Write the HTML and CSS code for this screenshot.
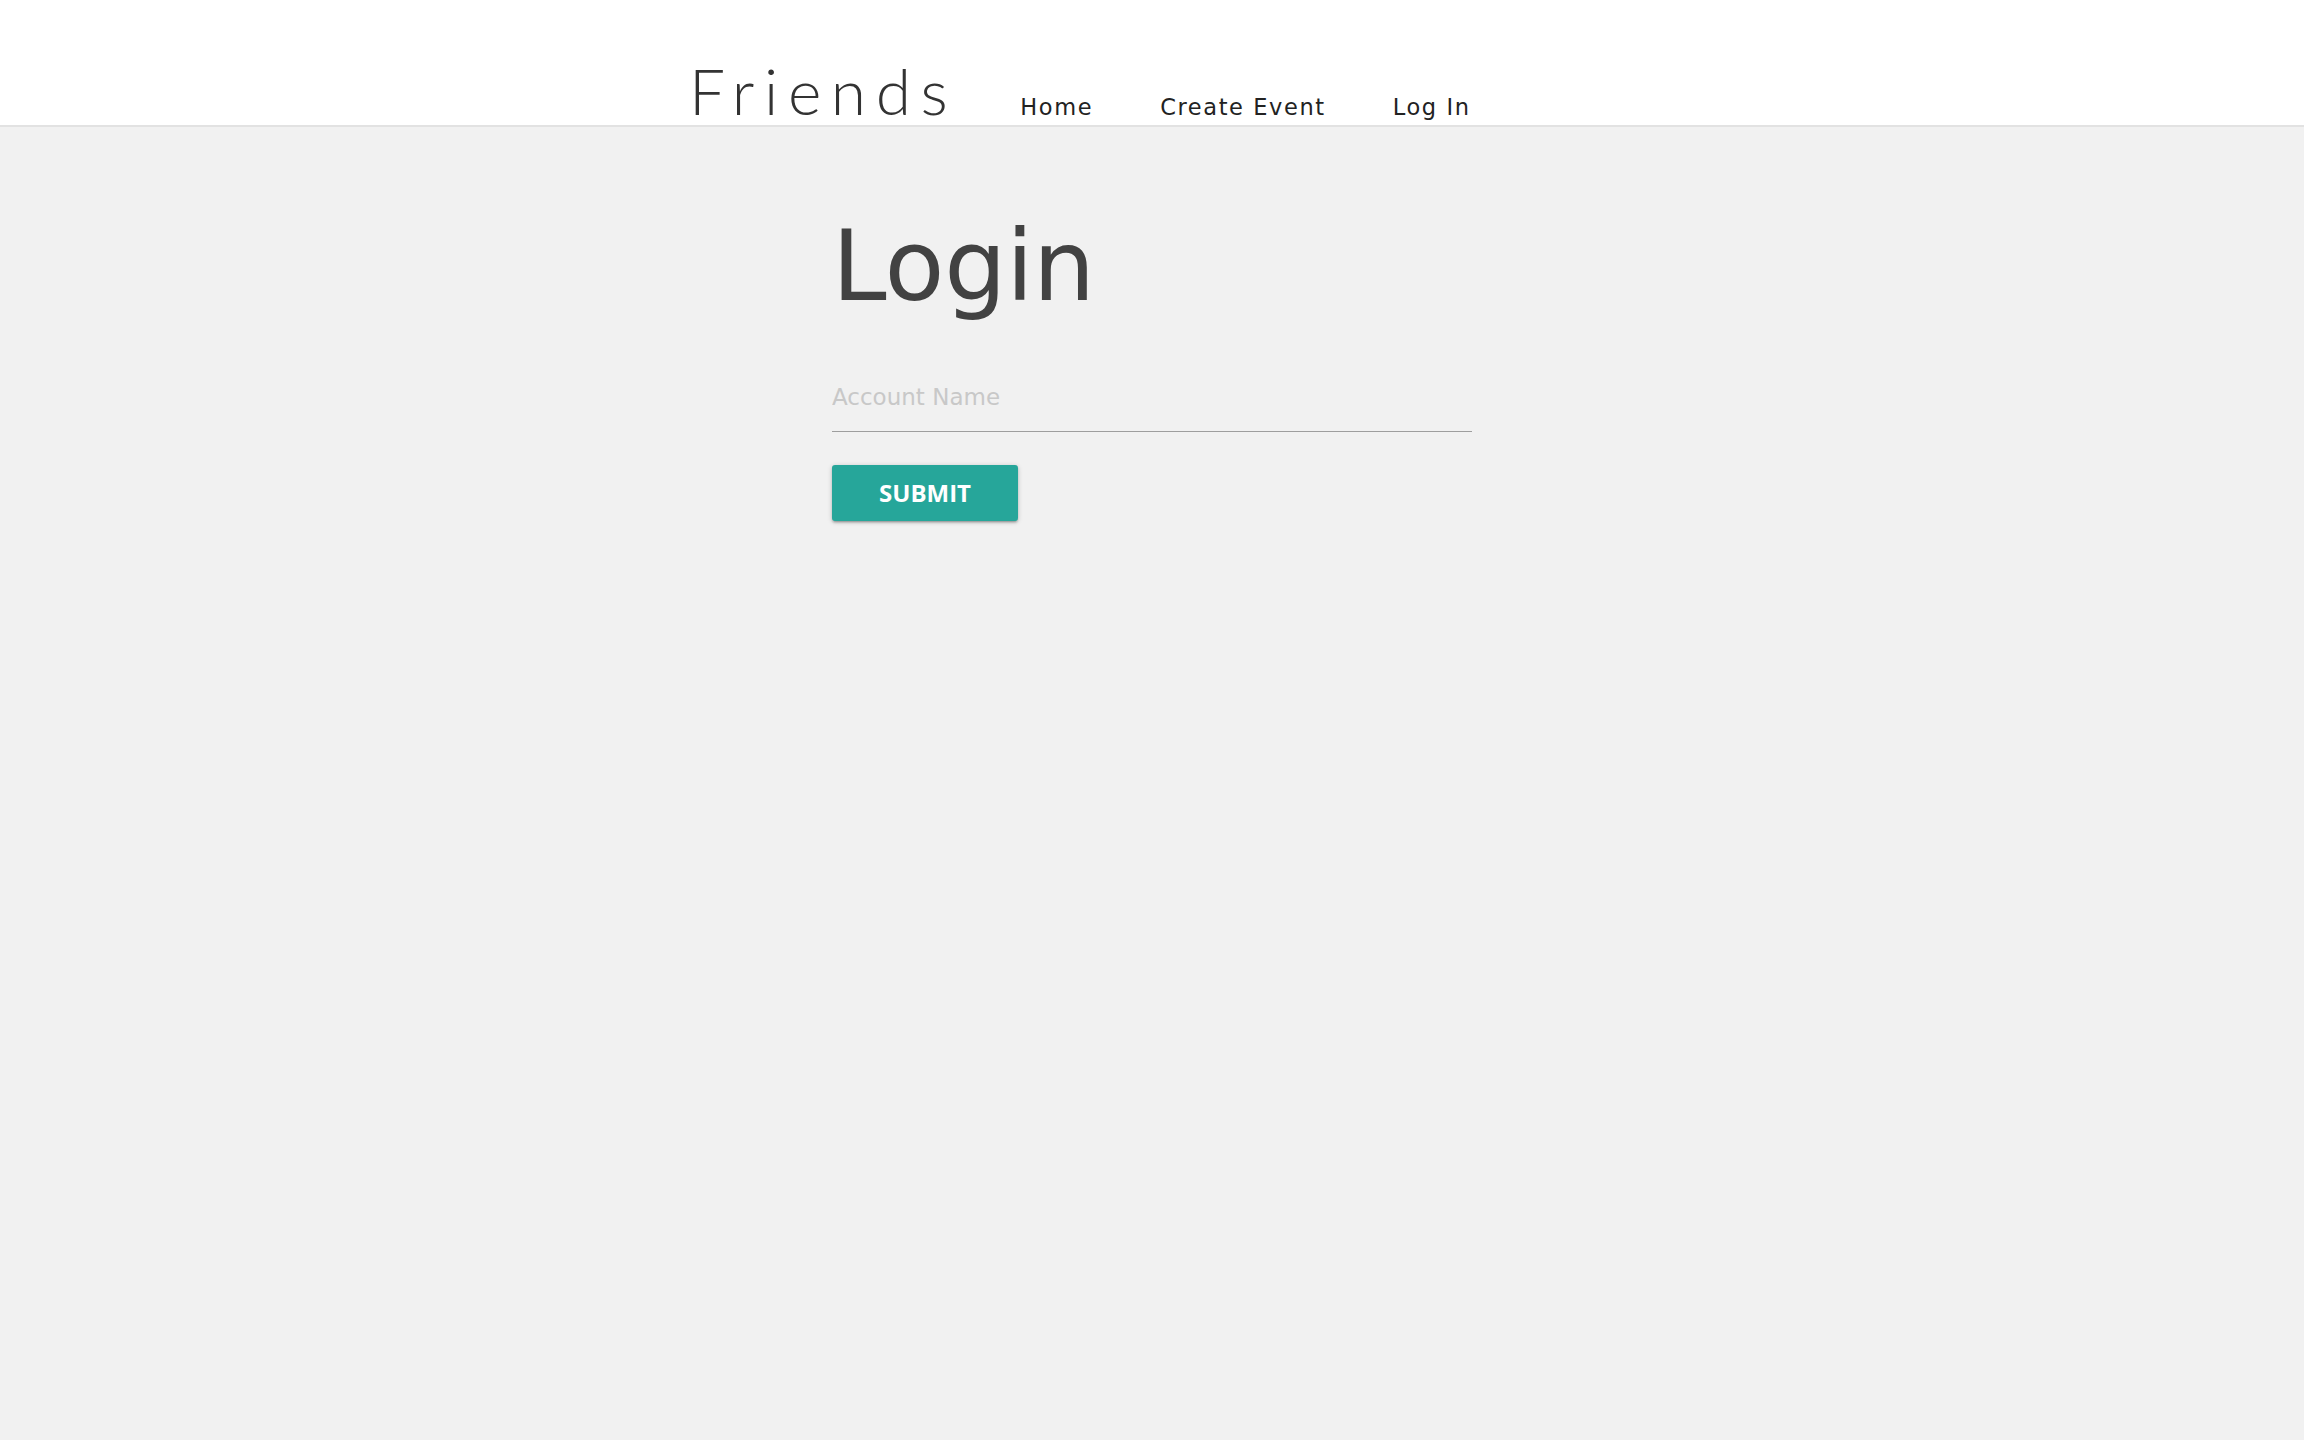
FILE: index.html
```html
<!DOCTYPE html>
<html lang="en">
<head>
<meta charset="utf-8">
<title>Friends - Login</title>
<link rel="stylesheet" href="styles.css">
</head>
<body>
<div class="page">
  <header class="topbar">
    <div class="topbar-inner">
      <a class="brand" href="#">Friends</a>
      <nav class="nav">
        <a class="nav-link" href="#">Home</a>
        <a class="nav-link" href="#">Create Event</a>
        <a class="nav-link" href="#">Log In</a>
      </nav>
    </div>
  </header>
  <main class="content">
    <h1 class="title">Login</h1>
    <form class="login-form">
      <input class="field" type="text" placeholder="Account Name">
      <button class="btn" type="button">SUBMIT</button>
    </form>
  </main>
</div>
</body>
</html>
```

FILE: styles.css
```css
html {
  background: #ffffff;
}
body {
  margin: 0;
  font-family: "DejaVu Sans", "Liberation Sans", sans-serif;
}
.page {
  min-height: 1440px;
  background: #f1f1f1;
}
.topbar {
  background: #ffffff;
  height: 125px;
  border-bottom: 2px solid #e2e2e2;
}
.topbar-inner {
  width: 800px;
  margin-left: calc(50% - 463px);
  padding-top: 59px;
  display: flex;
  align-items: baseline;
  box-sizing: border-box;
  height: 125px;
}
.brand {
  font-family: "Lato", sans-serif;
  font-weight: 300;
  font-size: 64px;
  line-height: 1;
  letter-spacing: 9.6px;
  color: #333333;
  text-decoration: none;
}
.nav {
  display: flex;
  align-items: baseline;
  gap: 67px;
  margin-left: 63px;
}
.nav-link {
  font-family: "DejaVu Sans", sans-serif;
  font-size: 22.5px;
  line-height: 1;
  letter-spacing: 1.6px;
  color: #222222;
  text-decoration: none;
}
.content {
  width: 640px;
  margin: 0 auto;
  padding-top: 90px;
}
.title {
  margin: 0;
  font-family: "DejaVu Sans", sans-serif;
  font-weight: 400;
  font-size: 98px;
  line-height: 1;
  letter-spacing: -0.3px;
  color: #424242;
}
.login-form {
  display: flex;
  flex-direction: column;
  align-items: flex-start;
  margin-top: 68px;
}
.field {
  width: 640px;
  box-sizing: content-box;
  height: 28px;
  padding: 0 0 20px 0;
  margin: 0;
  border: none;
  border-bottom: 1px solid #9e9e9e;
  background: transparent;
  font-family: "DejaVu Sans", sans-serif;
  font-size: 23px;
  color: #333;
  outline: none;
}
.field::placeholder {
  color: #c8c8c8;
}
.btn {
  margin-top: 33px;
  width: 186px;
  height: 56px;
  border: none;
  border-radius: 3px;
  background: #26a69a;
  color: #ffffff;
  font-family: "Open Sans", sans-serif;
  font-weight: 700;
  font-size: 24px;
  line-height: 56px;
  padding: 0;
  box-shadow: 0 2px 2px 0 rgba(0,0,0,0.14), 0 3px 1px -2px rgba(0,0,0,0.12), 0 1px 5px 0 rgba(0,0,0,0.2);
  cursor: pointer;
}
```
